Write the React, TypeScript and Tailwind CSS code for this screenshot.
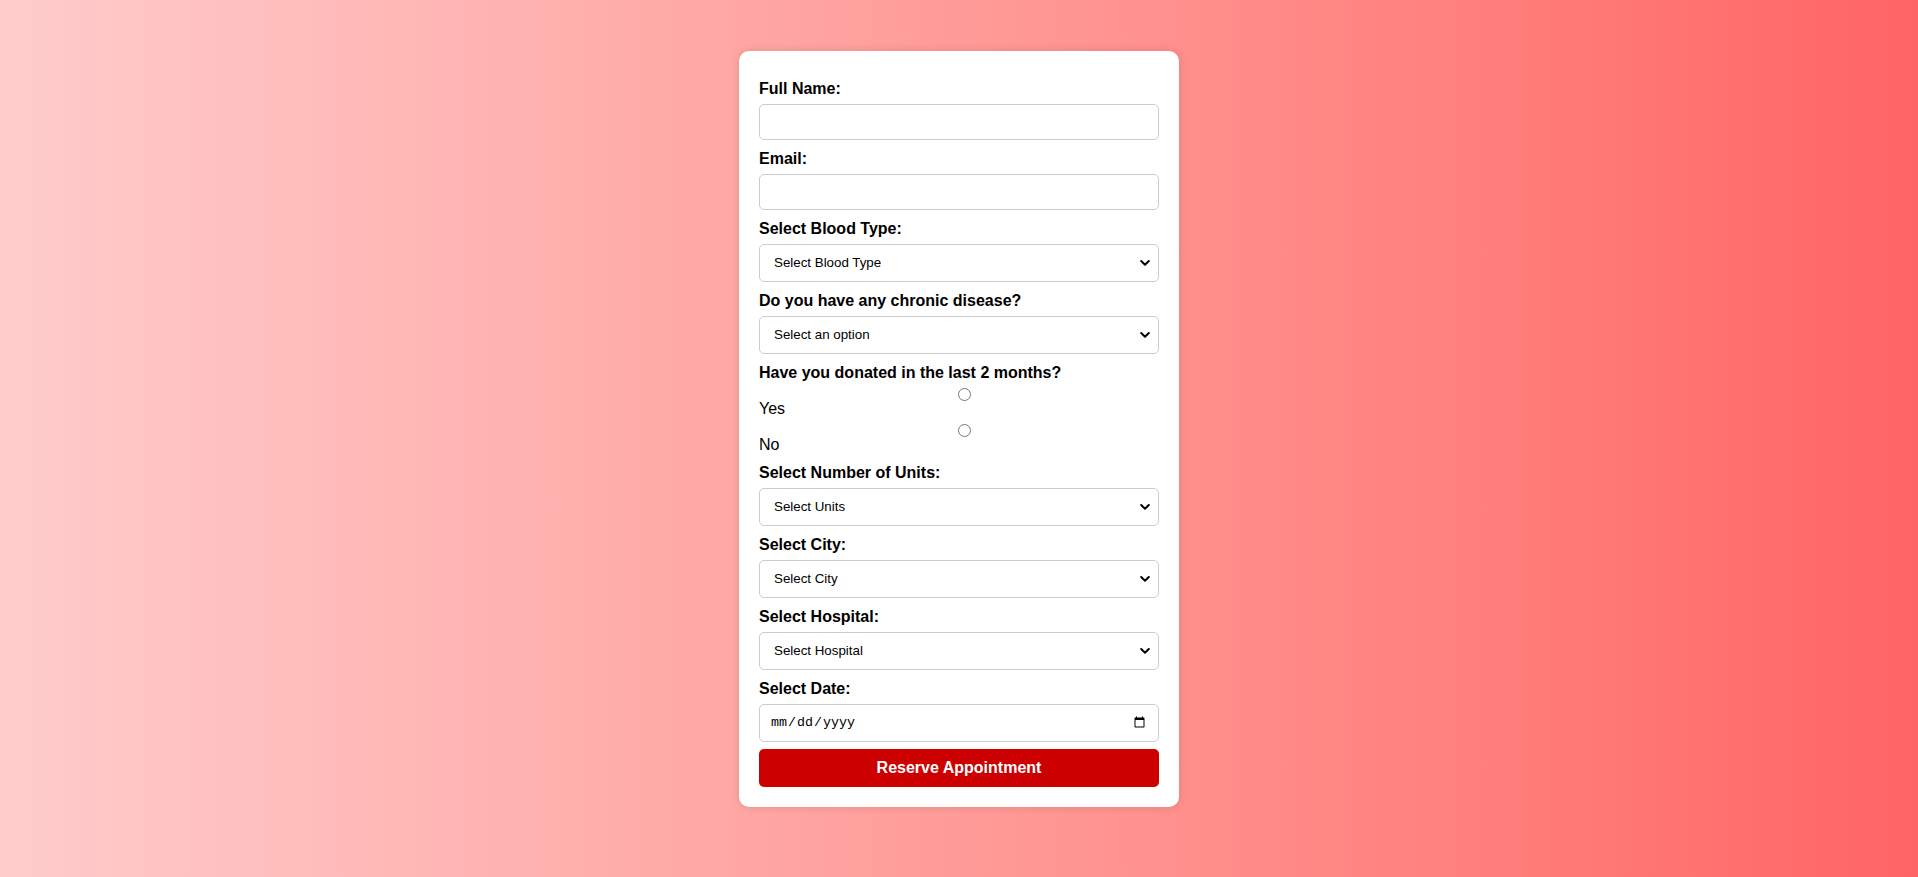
import React from "react";

const labelCls = "block text-base font-bold leading-[18px] text-black";
const fieldCls =
  "block w-full rounded-[5px] border border-[#cccccc] bg-white text-[13.33px] text-black outline-none";

function Chevron() {
  return (
    <svg
      className="pointer-events-none absolute right-[9px] top-1/2 -translate-y-1/2"
      width="10"
      height="7"
      viewBox="0 0 10 7"
      fill="none"
    >
      <path d="M1.2 1.5 L5 5.2 L8.8 1.5" stroke="#000" strokeWidth="2" strokeLinecap="round" strokeLinejoin="round" />
    </svg>
  );
}

function SelectField({ label, placeholder }: { label: string; placeholder: string }) {
  return (
    <div className="mt-[10px]">
      <label className={labelCls}>{label}</label>
      <div className="relative mt-[6px]">
        <select className={fieldCls + " h-[38px] appearance-none pl-[14px] pr-8"} defaultValue="">
          <option value="">{placeholder}</option>
        </select>
        <Chevron />
      </div>
    </div>
  );
}

function TextField({ label, type, first }: { label: string; type: string; first?: boolean }) {
  return (
    <div className={first ? "" : "mt-[10px]"}>
      <label className={labelCls}>{label}</label>
      <input type={type} className={fieldCls + " mt-[6px] h-[36px] px-[10px]"} />
    </div>
  );
}

function RadioRow({ name, text }: { name: string; text: string }) {
  return (
    <>
      <div className="flex h-[12px] items-start justify-center pl-[10px]">
        <input type="radio" name={name} className="m-0 h-[13px] w-[13px] shrink-0" />
      </div>
      <span className="block text-base leading-[18px] text-black">{text}</span>
    </>
  );
}

export default function App() {
  return (
    <main
      className="flex h-screen w-full justify-center bg-linear-to-r from-[#ffcccc] to-[#ff6464] pt-[51px]"
      style={{ fontFamily: '"Liberation Sans", Arial, sans-serif' }}
    >
      <form
        className="h-fit w-[440px] rounded-[10px] bg-white px-5 pb-5 pt-[29px] shadow-[0_0_10px_rgba(0,0,0,0.12)]"
        onSubmit={(e) => e.preventDefault()}
      >
        <TextField label="Full Name:" type="text" first />
        <TextField label="Email:" type="email" />
        <SelectField label="Select Blood Type:" placeholder="Select Blood Type" />
        <SelectField label="Do you have any chronic disease?" placeholder="Select an option" />

        <div className="mt-[10px]">
          <label className={labelCls}>Have you donated in the last 2 months?</label>
          <div className="mt-[6px]">
            <RadioRow name="donated" text="Yes" />
          </div>
          <div className="mt-[6px]">
            <RadioRow name="donated" text="No" />
          </div>
        </div>

        <SelectField label="Select Number of Units:" placeholder="Select Units" />
        <SelectField label="Select City:" placeholder="Select City" />
        <SelectField label="Select Hospital:" placeholder="Select Hospital" />

        <div className="mt-[10px]">
          <label className={labelCls}>Select Date:</label>
          <input
            type="date"
            className={fieldCls + " mt-[6px] h-[38px] px-[10px]"}
            style={{ fontFamily: '"Liberation Mono", monospace' }}
          />
        </div>

        <button
          type="submit"
          className="mt-[7px] block h-[38px] w-full rounded-[5px] bg-[#cc0000] text-base font-bold text-white"
        >
          Reserve Appointment
        </button>
      </form>
    </main>
  );
}
